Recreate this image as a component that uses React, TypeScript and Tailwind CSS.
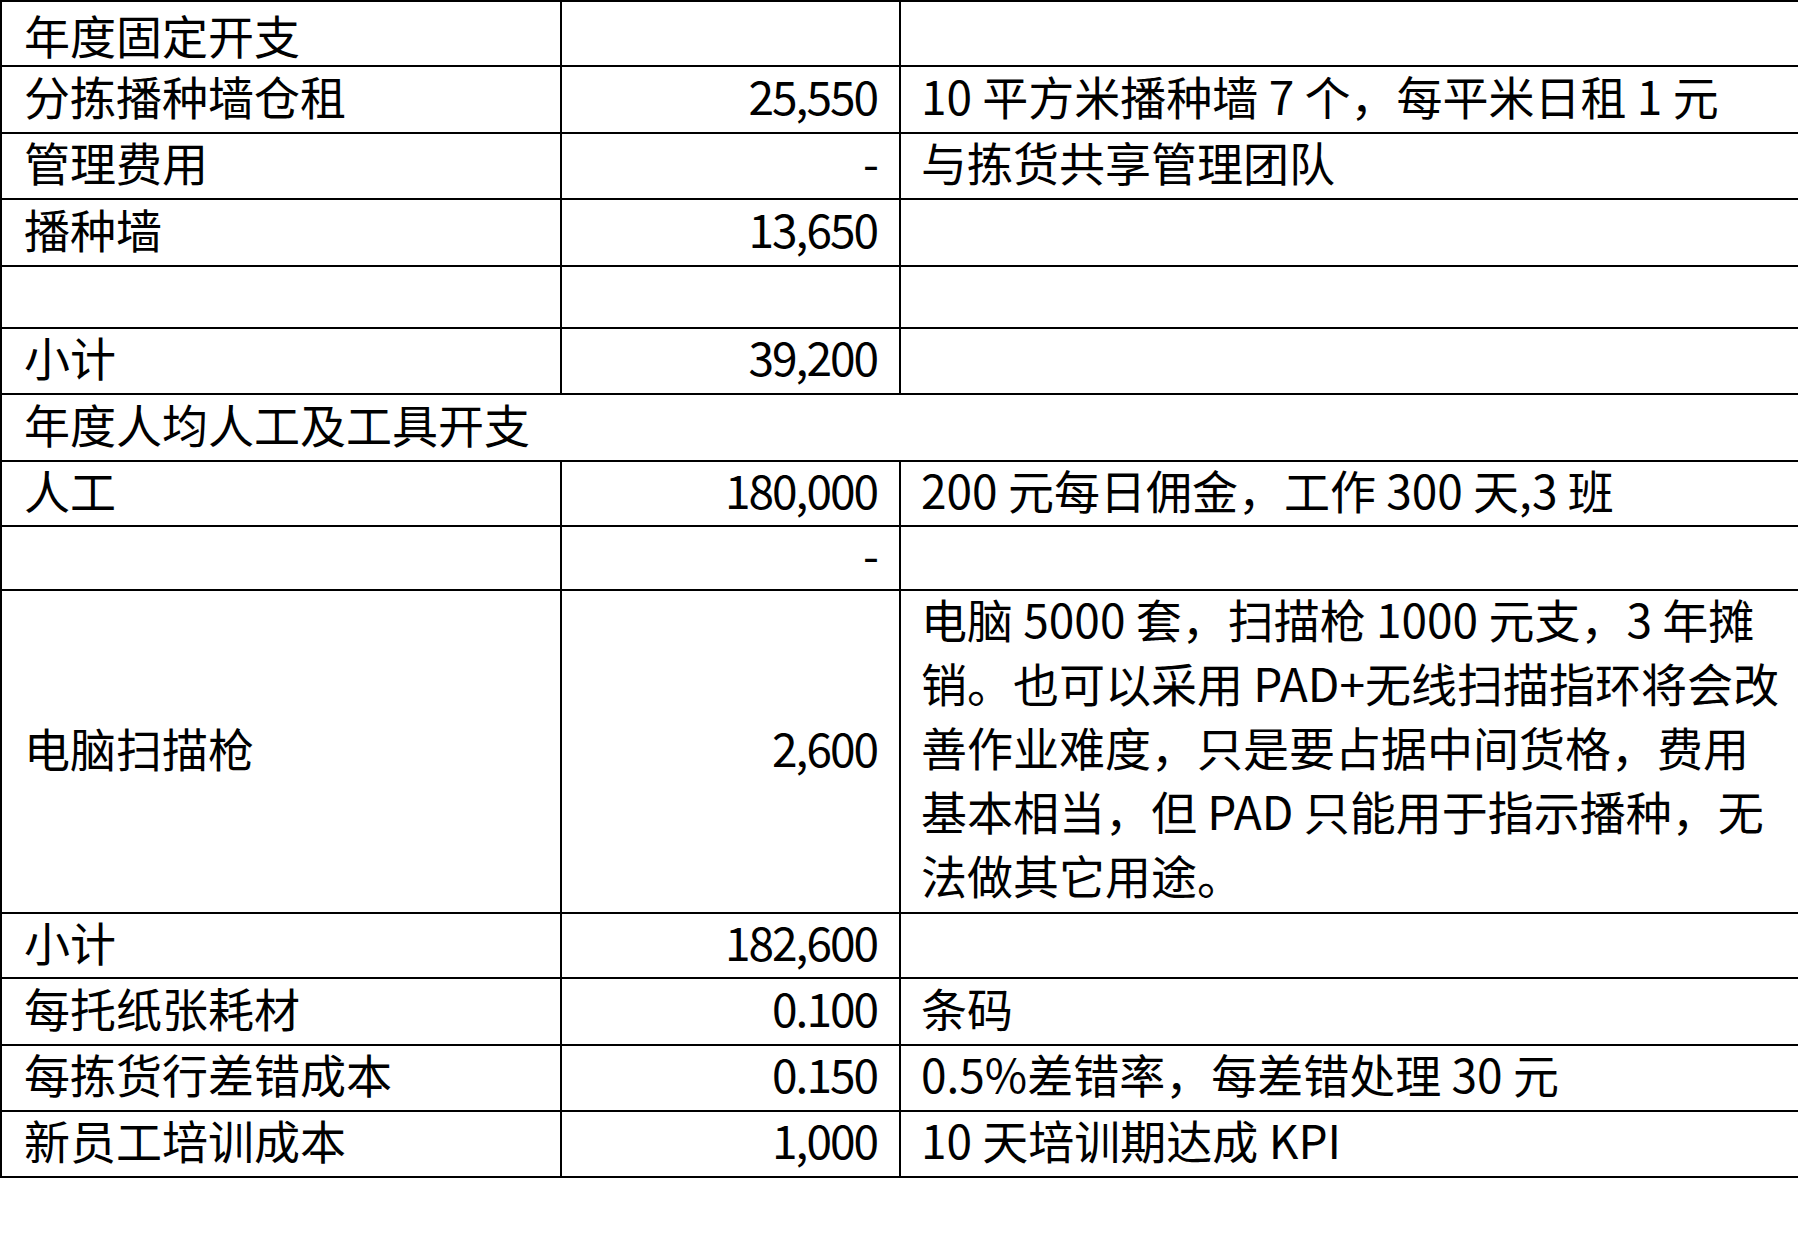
import React from "react";

type Row = {
  label?: string;
  amount?: string;
  note?: React.ReactNode;
  h: string;
  span?: boolean;
};

const rows: Row[] = [
  { label: "年度固定开支", h: "h-[65px]" },
  { label: "分拣播种墙仓租", amount: "25,550", note: "10 平方米播种墙 7 个，每平米日租 1 元", h: "h-[67px]" },
  { label: "管理费用", amount: "-", note: "与拣货共享管理团队", h: "h-[66px]" },
  { label: "播种墙", amount: "13,650", h: "h-[67px]" },
  { h: "h-[62px]" },
  { label: "小计", amount: "39,200", h: "h-[66px]" },
  { label: "年度人均人工及工具开支", h: "h-[67px]", span: true },
  { label: "人工", amount: "180,000", note: "200 元每日佣金，工作 300 天,3 班", h: "h-[65px]" },
  { amount: "-", h: "h-[64px]" },
  {
    label: "电脑扫描枪",
    amount: "2,600",
    note: (
      <>
        电脑 5000 套，扫描枪 1000 元支，3 年摊
        <br />
        销。也可以采用 PAD+无线扫描指环将会改
        <br />
        善作业难度，只是要占据中间货格，费用
        <br />
        基本相当，但 PAD 只能用于指示播种，无
        <br />
        法做其它用途。
      </>
    ),
    h: "h-[323px]",
  },
  { label: "小计", amount: "182,600", h: "h-[65px]" },
  { label: "每托纸张耗材", amount: "0.100", note: "条码", h: "h-[67px]" },
  { label: "每拣货行差错成本", amount: "0.150", note: "0.5%差错率，每差错处理 30 元", h: "h-[66px]" },
  { label: "新员工培训成本", amount: "1,000", note: "10 天培训期达成 KPI", h: "h-[66px]" },
];

export default function App() {
  return (
    <div className="w-[1798px] h-[1241px] bg-white overflow-hidden text-black font-['Noto_Sans_CJK_SC',sans-serif] text-[46px] leading-[46px]">
      <div className="border-t-2 border-l-2 border-black">
        {rows.map((row, i) => {
          const nudge = i === 0 ? "pb-0" : "pb-[10px]";
          return (
            <div key={i} className={`flex border-b-2 border-black ${row.h}`}>
              {row.span ? (
                <div className={`flex-1 flex items-center pl-[22px] whitespace-nowrap ${nudge}`}>{row.label}</div>
              ) : (
                <>
                  <div className={`w-[560px] shrink-0 flex items-center pl-[22px] border-r-2 border-black whitespace-nowrap ${nudge}`}>
                    {row.label}
                  </div>
                  <div className={`w-[339px] shrink-0 flex items-center justify-end pr-[22px] border-r-2 border-black whitespace-nowrap tracking-[-2px] ${nudge}`}>
                    {row.amount}
                  </div>
                  {i === 9 ? (
                    <div className="flex-1 pl-[20px] whitespace-nowrap leading-[64px]">
                      <div className="-mt-[5px]">{row.note}</div>
                    </div>
                  ) : (
                    <div className={`flex-1 flex items-center pl-[20px] whitespace-nowrap ${nudge}`}>
                      <div>{row.note}</div>
                    </div>
                  )}
                </>
              )}
            </div>
          );
        })}
      </div>
    </div>
  );
}
